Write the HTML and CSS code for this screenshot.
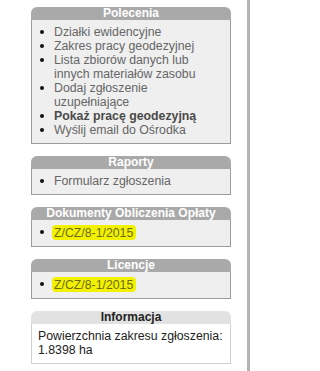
FILE: index.html
```html
<!DOCTYPE html>
<html lang="pl">
<head>
<meta charset="utf-8">
<title>Panel</title>
<link rel="stylesheet" href="styles.css">
</head>
<body>
<div class="sidebar">
  <div class="panel">
    <div class="panel-head">Polecenia</div>
    <ul class="panel-body list">
      <li>Działki ewidencyjne</li>
      <li>Zakres pracy geodezyjnej</li>
      <li>Lista zbiorów danych lub innych materiałów zasobu</li>
      <li>Dodaj zgłoszenie uzupełniające</li>
      <li class="strong">Pokaż pracę geodezyjną</li>
      <li>Wyślij email do Ośrodka</li>
    </ul>
  </div>
  <div class="panel">
    <div class="panel-head">Raporty</div>
    <ul class="panel-body list">
      <li>Formularz zgłoszenia</li>
    </ul>
  </div>
  <div class="panel">
    <div class="panel-head">Dokumenty Obliczenia Opłaty</div>
    <ul class="panel-body list">
      <li><span class="mark">Z/CZ/8-1/2015</span></li>
    </ul>
  </div>
  <div class="panel">
    <div class="panel-head">Licencje</div>
    <ul class="panel-body list">
      <li><span class="mark">Z/CZ/8-1/2015</span></li>
    </ul>
  </div>
  <div class="panel info">
    <div class="panel-head">Informacja</div>
    <div class="panel-body text">Powierzchnia zakresu zgłoszenia:<br>1.8398 ha</div>
  </div>
</div>
</body>
</html>
```

FILE: styles.css
```css
html, body {
  margin: 0;
  padding: 0;
  background: #fff;
}
body {
  font-family: "Liberation Sans", Arial, sans-serif;
  font-size: 12.3px;
}
.sidebar {
  width: 250px;
  min-height: 371px;
  box-sizing: border-box;
  border-right: 3px solid #b3b3b3;
  padding: 7px 0 0 31px;
}
.panel {
  width: 200px;
  margin-bottom: 12px;
}
.panel-head {
  height: 13px;
  line-height: 13px;
  background: #a9a9a9;
  color: #fff;
  font-weight: bold;
  font-size: 12px;
  text-align: center;
  border-radius: 6px 6px 0 0;
  white-space: nowrap;
}
.panel-body {
  margin: 0;
  background: #efefef;
  border: 1px solid #9c9c9c;
  border-top: none;
  padding: 5px 0 6px 0;
  line-height: 14px;
  color: #666;
}
.list {
  list-style: none;
}
.list li {
  display: flex;
  align-items: flex-start;
  padding-right: 14px;
}
.list li::before {
  content: "";
  flex: none;
  width: 4px;
  height: 4px;
  border-radius: 50%;
  background: #111;
  margin: 5px 10px 0 8px;
}
.list li.strong {
  font-weight: bold;
  color: #4a4a4a;
}
.mark {
  background: #f2f200;
  color: #6f6a1a;
  padding: 1px 3px 0 2px;
  margin-left: -2px;
  border-radius: 4px;
}
.info .panel-head {
  background: #e2e2e2;
  color: #222;
}
.info .panel-body {
  background: #fff;
  border-color: #cfcfcf;
  color: #222;
  padding-left: 6px;
}
```
